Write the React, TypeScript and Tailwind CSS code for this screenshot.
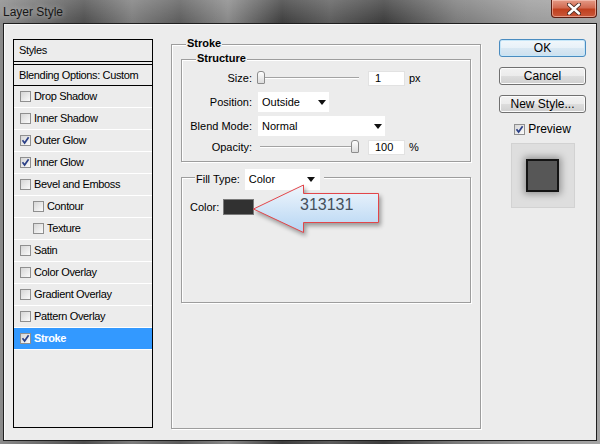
import React from 'react';

const styleRows = [
  { label: 'Drop Shadow' },
  { label: 'Inner Shadow' },
  { label: 'Outer Glow', checked: true },
  { label: 'Inner Glow', checked: true },
  { label: 'Bevel and Emboss' },
  { label: 'Contour', indent: true },
  { label: 'Texture', indent: true },
  { label: 'Satin' },
  { label: 'Color Overlay' },
  { label: 'Gradient Overlay' },
  { label: 'Pattern Overlay' },
  { label: 'Stroke', checked: true, active: true },
];

const Check: React.FC<{ checked?: boolean }> = ({ checked }) => (
  <span className="flex h-[11px] w-[11px] shrink-0 items-center justify-center border border-[#8f8f8f] bg-gradient-to-br from-[#d6d6d6] to-[#fbfbfb]">
    {checked && (
      <svg width="9" height="9" viewBox="0 0 9 9">
        <path d="M1.5 4.2 L3.6 7 L7.6 1.2" fill="none" stroke="#2a3f86" strokeWidth="1.7" />
      </svg>
    )}
  </span>
);

const Select: React.FC<{ value: string; className: string }> = ({ value, className }) => (
  <div className={`flex h-[20px] items-center justify-between bg-white pl-[4px] pr-[3px] text-[11px] ${className}`}>
    <span>{value}</span>
    <svg width="8" height="5" viewBox="0 0 8 5">
      <path d="M0 0h8L4 5z" fill="#111" />
    </svg>
  </div>
);

const Slider: React.FC<{ className: string; thumb: 'left' | 'right' }> = ({ className, thumb }) => (
  <div className={`relative flex h-[14px] items-center ${className}`}>
    <div className="h-[2px] w-full border-t border-[#a3a3a3] border-b border-b-white" />
    <span
      className={`absolute top-0 h-[13px] w-[8px] rounded-t-[3px] rounded-b-[1px] border border-[#8c8c8c] bg-gradient-to-b from-white to-[#dcdcdc] ${
        thumb === 'left' ? 'left-0' : 'right-0'
      }`}
    />
  </div>
);

const NumBox: React.FC<{ value: string }> = ({ value }) => (
  <div className="flex h-[15px] w-[37px] items-center border border-[#e2e2e2] bg-white pl-[6px] text-[11px]">{value}</div>
);

const Btn: React.FC<{ children: React.ReactNode; primary?: boolean }> = ({ children, primary }) => (
  <div
    className={`flex h-[18px] w-[87px] items-center justify-center rounded-[3px] border text-[12px] text-black ${
      primary
        ? 'border-[#4a8cc0] bg-[linear-gradient(#f1f7fb_0%,#e8f1f8_50%,#d9e8f3_50%,#cde0ee_100%)] shadow-[inset_0_0_0_1px_#c6e6f8]'
        : 'border-[#707070] bg-[linear-gradient(#f2f2f2_0%,#ebebeb_50%,#dddddd_50%,#cfcfcf_100%)] shadow-[inset_0_0_0_1px_#fbfbfb]'
    }`}
  >
    {children}
  </div>
);

const Legend: React.FC<{ children: React.ReactNode }> = ({ children }) => (
  <span className="absolute left-[14px] top-[-8px] bg-[#ececec] px-[1px] text-[11px] font-bold leading-[13px]">{children}</span>
);

const groupBox = 'relative border border-[#9d9d9d] shadow-[inset_1px_1px_0_#fff,1px_1px_0_#fff]';

export default function App() {
  return (
    <div className="flex h-[444px] w-[600px] flex-col bg-[linear-gradient(90deg,#8a8a8a_0%,#6c6c6c_7%,#4e4e4e_14%,#7c7c7c_22%,#5c5c5c_30%,#888888_38%,#3e3e3e_47%,#5c5c5c_55%,#3c3c3c_64%,#7a7a7a_76%,#9a9a9a_88%,#a4a4a4_100%)] font-['Liberation_Sans',Arial,sans-serif] text-black">
      {/* title bar */}
      <div className="flex h-[23px] items-start justify-between bg-[linear-gradient(rgba(255,255,255,0.18),rgba(255,255,255,0))]">
        <span className="pl-[3px] pt-[3px] text-[12px] text-[#161616] [text-shadow:0_0_6px_rgba(255,255,255,0.6)]">Layer Style</span>
        <div className="mr-[3px] flex h-[18px] w-[46px] items-center justify-center rounded-b-[4px] border border-t-0 border-[#5a1d12] bg-[linear-gradient(#e49a86_0%,#d26b52_45%,#c0401f_55%,#c9583a_100%)] shadow-[inset_0_0_0_1px_rgba(255,220,210,0.5)]">
          <svg width="14" height="12" viewBox="0 0 14 12">
            <path d="M2 1.5 L12 10.5 M12 1.5 L2 10.5" stroke="#4a2a22" strokeWidth="4.2" strokeLinecap="round" />
            <path d="M2 1.5 L12 10.5 M12 1.5 L2 10.5" stroke="#fff" strokeWidth="2.4" strokeLinecap="round" />
          </svg>
        </div>
      </div>

      {/* body */}
      <div className="mx-[3px] mb-[3px] flex flex-1 border border-[#1f1f1f] bg-[#ececec] pl-[9px] pt-[15px] shadow-[inset_1px_1px_0_#fafafa]">
        {/* styles list */}
        <div className="flex h-[389px] w-[140px] flex-col border border-black text-[11px] tracking-[-0.35px]">
          <div className="flex h-[22px] shrink-0 items-center border-b border-black pl-[5px]">Styles</div>
          <div className="h-[2px] shrink-0" />
          <div className="flex h-[22px] shrink-0 items-center border-y border-black pl-[5px]">Blending Options: Custom</div>
          {styleRows.map((r) => (
            <div
              key={r.label}
              className={`flex h-[22px] shrink-0 items-center gap-[3px] border-b border-white ${r.indent ? 'pl-[19px]' : 'pl-[6px]'} ${
                r.active ? 'bg-[#3399ff] font-bold text-white' : ''
              }`}
            >
              <Check checked={r.checked} />
              <span>{r.label}</span>
            </div>
          ))}
        </div>

        {/* stroke group */}
        <div className={`${groupBox} ml-[18px] mt-[5px] h-[385px] w-[310px] px-[9px] pt-[14px]`}>
          <Legend>Stroke</Legend>

          <div className={`${groupBox} flex h-[103px] flex-col pt-[10px] text-[11px]`}>
            <Legend>Structure</Legend>
            <div className="flex h-[16px] items-center">
              <span className="w-[70px] text-right">Size:</span>
              <Slider className="ml-[5px] w-[102px]" thumb="left" />
              <span className="ml-[9px]">
                <NumBox value="1" />
              </span>
              <span className="ml-[4px]">px</span>
            </div>
            <div className="mt-[6px] flex h-[20px] items-center">
              <span className="w-[70px] text-right">Position:</span>
              <Select value="Outside" className="ml-[6px] w-[71px]" />
            </div>
            <div className="mt-[4px] flex h-[20px] items-center">
              <span className="w-[70px] text-right">Blend Mode:</span>
              <Select value="Normal" className="ml-[6px] w-[127px]" />
            </div>
            <div className="mt-[3px] flex h-[16px] items-center">
              <span className="w-[70px] text-right">Opacity:</span>
              <Slider className="ml-[8px] w-[99px]" thumb="right" />
              <span className="ml-[9px]">
                <NumBox value="100" />
              </span>
              <span className="ml-[4px]">%</span>
            </div>
          </div>

          <div className={`${groupBox} mt-[15px] h-[126px] text-[11px]`}>
            <div className="absolute left-[13px] top-[-9px] flex items-center gap-[5px] bg-[#ececec] pl-[1px] pr-[4px]">
              <span>Fill Type:</span>
              <Select value="Color" className="h-[21px] w-[75px] pr-[5px]" />
            </div>
            <div className="mt-[21px] flex items-center gap-[4px] pl-[8px]">
              <span>Color:</span>
              <span className="h-[16px] w-[31px] border border-[#7a7a7a] bg-[#313131]" />
            </div>

            {/* callout */}
            <svg
              className="absolute left-[68px] top-[2px] drop-shadow-[2px_3px_2px_rgba(0,0,0,0.35)]"
              width="140"
              height="60"
              viewBox="250 180 140 60"
            >
              <defs>
                <linearGradient id="cg" x1="0" y1="0" x2="0" y2="1">
                  <stop offset="0" stopColor="#f0f6fc" />
                  <stop offset="1" stopColor="#b5d5f3" />
                </linearGradient>
              </defs>
              <polygon
                points="253.5,209 303.5,185 303.5,193.5 378.5,193.5 378.5,222.5 303.5,222.5 303.5,232.5"
                fill="url(#cg)"
                stroke="#e2464a"
                strokeWidth="1"
              />
            </svg>
            <span className="absolute left-[118px] top-[18px] text-[16px] leading-[18px] text-[#44505c]">313131</span>
          </div>
        </div>

        {/* buttons */}
        <div className="ml-[18px] flex flex-col gap-[10px]">
          <Btn primary>OK</Btn>
          <Btn>Cancel</Btn>
          <Btn>New Style...</Btn>
          <div className="-mt-[3px] flex flex-col items-center">
            <div className="flex items-center gap-[3px] text-[12px]">
              <Check checked />
              <span>Preview</span>
            </div>
            <div className="mt-[5px] flex h-[65px] w-[64px] items-center justify-center border border-[#d2d2d2] bg-[#dedede]">
              <span className="h-[33px] w-[33px] border-2 border-[#141414] bg-[#575757] shadow-[0_0_7px_2px_rgba(0,0,0,0.35)]" />
            </div>
          </div>
        </div>
      </div>
    </div>
  );
}
